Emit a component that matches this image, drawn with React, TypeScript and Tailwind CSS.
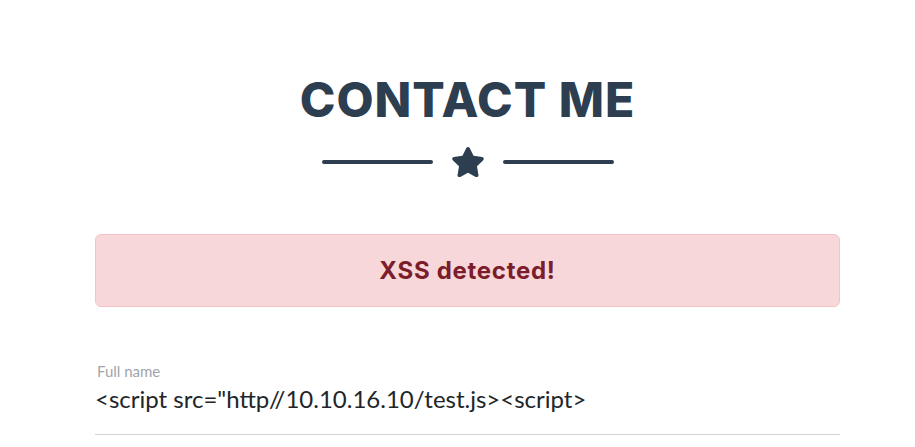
import { FaStar } from "react-icons/fa";

const App = () => (
  <div className="min-h-screen w-full bg-white pl-5" style={{ fontFamily: "Lato, 'Open Sans', sans-serif" }}>
    <section className="mx-auto w-[745px] pt-[74px]">
      <h2 className="text-center font-['Inter',sans-serif] text-[48px] font-extrabold uppercase leading-[52px] tracking-[0.02em] text-[#2c3e50]">
        Contact Me
      </h2>
      <div className="mt-[19px] flex items-center justify-center gap-[18px]">
        <div className="h-1 w-[111px] rounded-full bg-[#2c3e50]" />
        <FaStar size={34} className="text-[#2c3e50]" />
        <div className="h-1 w-[111px] rounded-full bg-[#2c3e50]" />
      </div>
      <div className="mt-[55px] flex h-[73px] items-center justify-center rounded-md border border-[#f5c2c7] bg-[#f8d7da]">
        <span className="font-['Inter',sans-serif] text-[24px] font-bold tracking-[0.03em] text-[#7b1d2a]">XSS detected!</span>
      </div>
      <div className="mt-[55px] border-b border-[#ced4da] pb-[21px]">
        <label className="block pl-0.5 text-[15px] leading-[18px] text-[#a0a5ab]">Full name</label>
        <div className="mt-[5px] text-[24px] leading-[28px] text-[#212529]">
          &lt;script src="http//10.10.16.10/test.js&gt;&lt;script&gt;
        </div>
      </div>
    </section>
  </div>
);

export default App;
